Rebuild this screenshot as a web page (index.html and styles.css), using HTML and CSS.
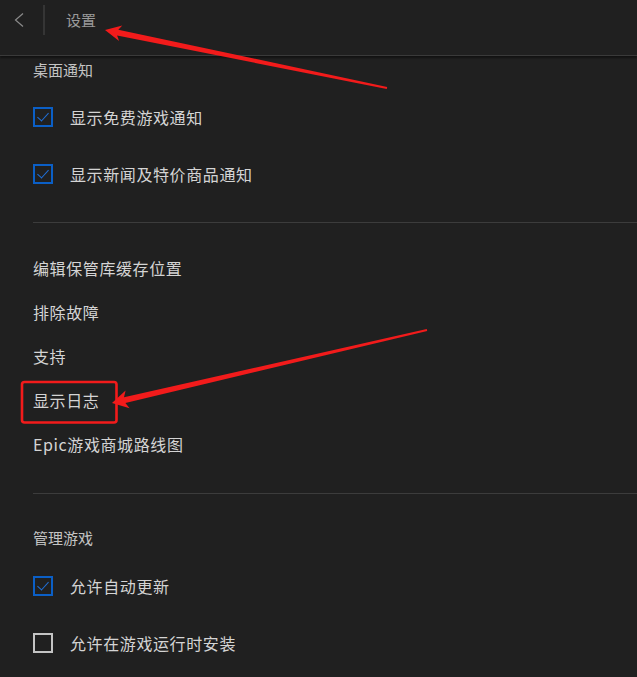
FILE: index.html
```html
<!DOCTYPE html>
<html lang="zh-CN">
<head>
    <meta charset="UTF-8">
    <meta name="viewport" content="width=device-width, initial-scale=1.0">
    <title>设置</title>
    <link rel="stylesheet" href="styles.css">
</head>
<body>
    <header class="topbar">
        <div class="topbar-row">
            <button class="back-button" aria-label="返回">
                <svg width="10" height="16" viewBox="0 0 10 16"><path d="M9 1.5 L1.5 8 L9 14.5" fill="none" stroke="#8a8a8a" stroke-width="1.2"/></svg>
            </button>
            <span class="topbar-divider"></span>
            <span class="topbar-title">设置</span>
        </div>
    </header>

    <main class="settings">
        <section class="group">
            <h2 class="group-title">桌面通知</h2>
            <ul class="check-list">
                <li class="check-row"><span class="checkbox is-checked"></span>显示免费游戏通知</li>
                <li class="check-row"><span class="checkbox is-checked"></span>显示新闻及特价商品通知</li>
            </ul>
        </section>

        <hr class="separator separator-top">

        <ul class="link-list">
            <li class="link-row">编辑保管库缓存位置</li>
            <li class="link-row">排除故障</li>
            <li class="link-row">支持</li>
            <li class="link-row">显示日志</li>
            <li class="link-row">Epic游戏商城路线图</li>
        </ul>

        <hr class="separator separator-bottom">

        <section class="group group-games">
            <h2 class="group-title">管理游戏</h2>
            <ul class="check-list check-list-games">
                <li class="check-row check-row-short"><span class="checkbox is-checked"></span>允许自动更新</li>
                <li class="check-row check-row-short"><span class="checkbox"></span>允许在游戏运行时安装</li>
            </ul>
        </section>
    </main>

    <!-- red annotations drawn over the screenshot -->
    <svg class="annotations" width="637" height="677" viewBox="0 0 637 677">
        <polygon fill="#f21b1b" points="105,30 122.3,25.4 118.3,29.7 387.2,87 386.8,89 117.1,35.5 119.1,41"/>
        <rect x="22" y="382" width="94.5" height="40.5" rx="2.5" fill="none" stroke="#f21b1b" stroke-width="2.6"/>
        <polygon fill="#f21b1b" points="112,403 125.6,390.6 124,397.2 426.8,329 427.2,331 125.4,403 129.6,408.2"/>
    </svg>
</body>
</html>
```

FILE: styles.css
```css
* {
    margin: 0;
    padding: 0;
    box-sizing: border-box;
}

body {
    background: #202020;
    color: #d2d2d2;
    font-family: "Noto Sans CJK SC", "Noto Sans", sans-serif;
    width: 637px;
    height: 677px;
    overflow: hidden;
    position: relative;
}

.topbar {
    height: 56px;
    border-bottom: 1px solid #3a3a3a;
    box-shadow: 0 2px 2px rgba(0, 0, 0, 0.45);
}

.topbar-row {
    height: 40px;
    display: flex;
    align-items: center;
}

.back-button {
    width: 43px;
    height: 40px;
    background: none;
    border: none;
    display: flex;
    align-items: center;
    padding-left: 14px;
}

.topbar-divider {
    width: 2px;
    height: 30px;
    background: #353535;
}

.topbar-title {
    margin-left: 21px;
    margin-top: -1px;
    font-size: 15px;
    color: #9a9a9a;
}

.settings {
    padding-left: 33px;
}

.group-title {
    height: 28px;
    line-height: 28px;
    font-size: 15px;
    font-weight: normal;
    color: #c4c4c4;
}

.check-list,
.link-list {
    list-style: none;
}

.check-list {
    padding-top: 4px;
}

.check-list-games {
    padding-top: 6px;
}

.check-row {
    height: 57px;
    display: flex;
    align-items: center;
    font-size: 16px;
    letter-spacing: 0.6px;
    color: #d4d4d4;
}

.check-row-short {
    height: 56.5px;
}

.checkbox {
    width: 20px;
    height: 20px;
    margin-right: 17px;
    border: 2px solid #c4c4c4;
    position: relative;
}

.checkbox.is-checked {
    border-color: #0b5fc6;
}

.checkbox.is-checked::after {
    content: "";
    position: absolute;
    left: 5px;
    top: 1px;
    width: 5px;
    height: 10px;
    border-right: 1.5px solid #1f6fd8;
    border-bottom: 1.5px solid #1f6fd8;
    transform: rotate(42deg);
}

.separator {
    border: none;
    border-top: 1px solid #3c3c3c;
}

.separator-top {
    margin-top: 20px;
}

.separator-bottom {
    margin-top: 27px;
}

.link-list {
    margin-top: 23px;
}

.link-row {
    height: 44px;
    line-height: 44px;
    font-size: 16px;
    letter-spacing: 0.6px;
    color: #d4d4d4;
}

.group-games {
    margin-top: 30px;
}

.annotations {
    position: absolute;
    left: 0;
    top: 0;
    pointer-events: none;
}
```
